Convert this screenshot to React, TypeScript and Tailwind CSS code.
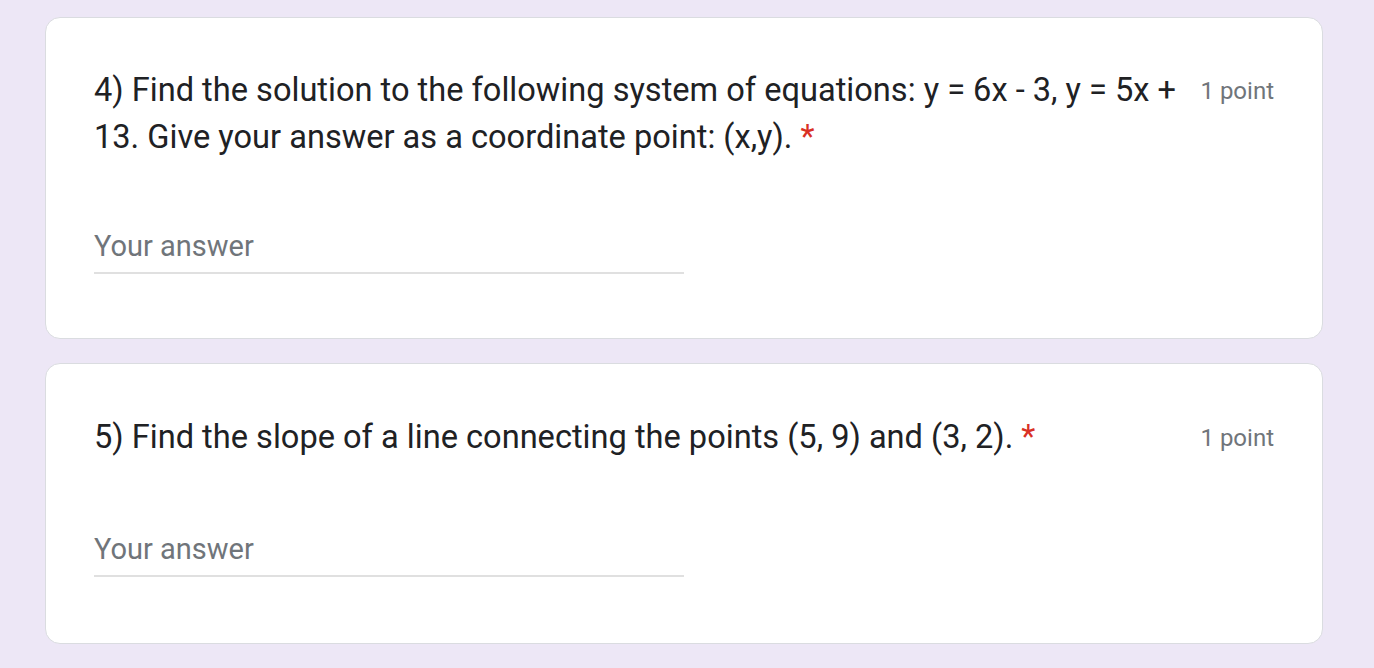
import React from "react";

function Question({
  children,
  titleTop,
  inputTop,
  bottom,
}: {
  children: React.ReactNode;
  titleTop: string;
  inputTop: string;
  bottom: string;
}) {
  return (
    <div className={`rounded-[15px] border border-[#dadce0] bg-white pl-12 pr-12 ${titleTop} ${bottom}`}>
      <div className="flex items-start">
        <div className="flex-1 text-[32.6px] leading-[47px] text-[#202124] [font-family:Roboto,sans-serif]">
          {children} <span className="text-[#d93025]">*</span>
        </div>
        <div className="ml-[12px] text-[24px] leading-[49px] text-[#70757a] [font-family:Roboto,sans-serif] whitespace-nowrap">
          1 point
        </div>
      </div>
      <div
        className={`${inputTop} w-[590px] border-b-2 border-[#e0e0e0] pb-[6px] text-[29px] leading-[40px] text-[#70757a] [font-family:Roboto,sans-serif]`}
      >
        Your answer
      </div>
    </div>
  );
}

export default function App() {
  return (
    <div className="min-h-[668px] w-full bg-[#ede7f6] pl-[45px] pr-[51px] pt-[17px] pb-[24px] flex flex-col gap-[24px]">
      <Question titleTop="pt-[49px]" inputTop="mt-[65px]" bottom="pb-[64px]">
        4) Find the solution to the following system of equations: y = 6x - 3, y = 5x + 13. Give your answer as a coordinate point: (x,y).
      </Question>
      <Question titleTop="pt-[50px]" inputTop="mt-[66px]" bottom="pb-[66px]">
        5) Find the slope of a line connecting the points (5, 9) and (3, 2).
      </Question>
    </div>
  );
}
